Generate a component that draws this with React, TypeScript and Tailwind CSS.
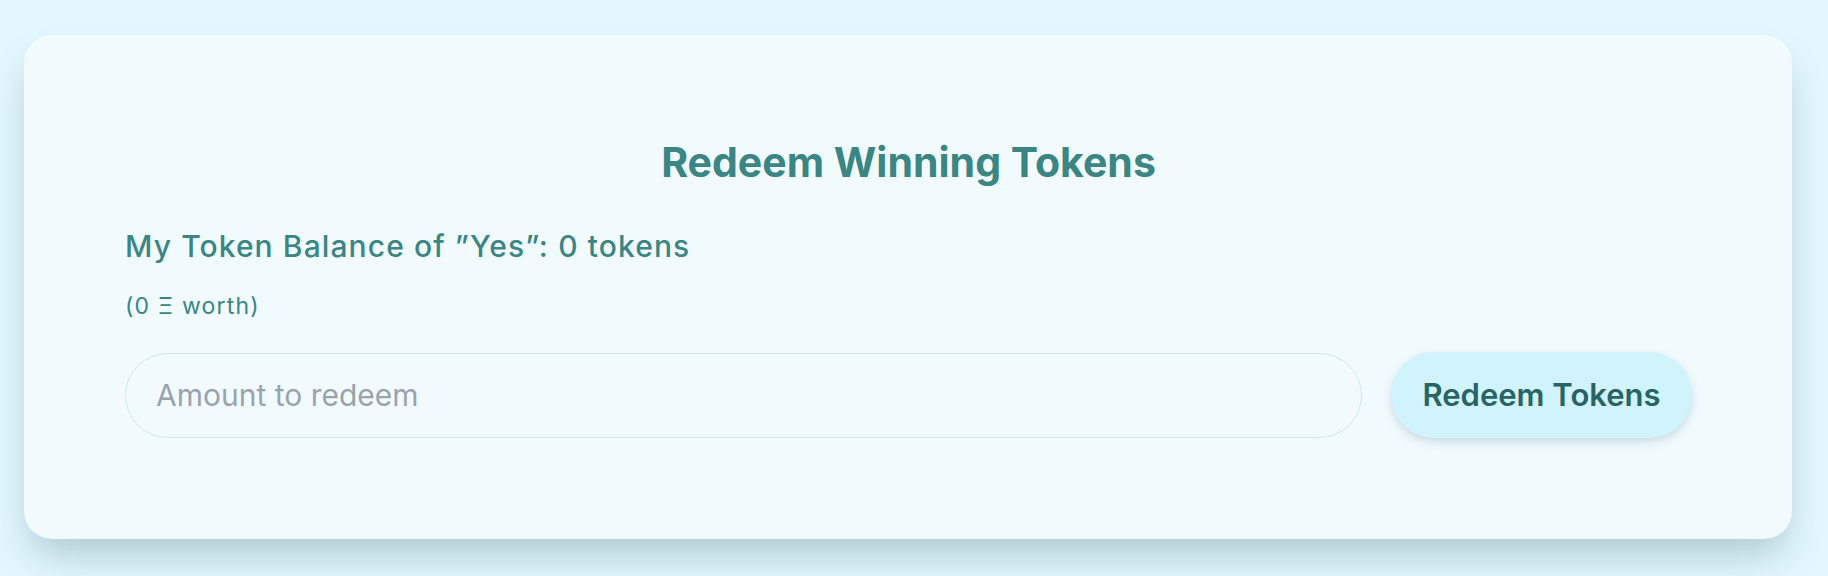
import React from "react";

export default function App() {
  return (
    <div className="min-h-[576px] w-full bg-[#e3f8fe] pt-[35px] pl-[24px] pr-[36px] pb-[37px]" style={{ fontFamily: "Inter, 'Noto Sans', sans-serif" }}>
      <div className="rounded-[28px] bg-[#f1fbfe] pt-[103px] pb-[101px] pl-[101px] pr-[100px] shadow-[0_22px_40px_-8px_rgba(40,80,100,0.3)]">
        <h2 className="text-center text-[41px] leading-[48px] font-bold text-[#3b8583]">Redeem Winning Tokens</h2>
        <p className="mt-[42px] text-[30px] leading-[36px] font-medium tracking-[1.1px] text-[#3b8583]">My Token Balance of ”Yes”: 0 tokens</p>
        <p className="mt-[28px] text-[23px] leading-[28px] tracking-[1.2px] text-[#3b8583]">(0 Ξ worth)</p>
        <div className="mt-[32px] flex items-center gap-[29px]">
          <input
            type="text"
            placeholder="Amount to redeem"
            className="h-[85px] flex-1 rounded-full border border-[#cfe8ea] bg-transparent pl-[30px] text-[30px] text-[#3b8583] outline-none placeholder:text-[#9aa3ad]"
          />
          <button className="h-[86px] w-[301px] rounded-full bg-[#d1f3fc] text-[31px] font-semibold text-[#286464] shadow-[0_4px_10px_rgba(40,80,100,0.18)]">
            Redeem Tokens
          </button>
        </div>
      </div>
    </div>
  );
}
